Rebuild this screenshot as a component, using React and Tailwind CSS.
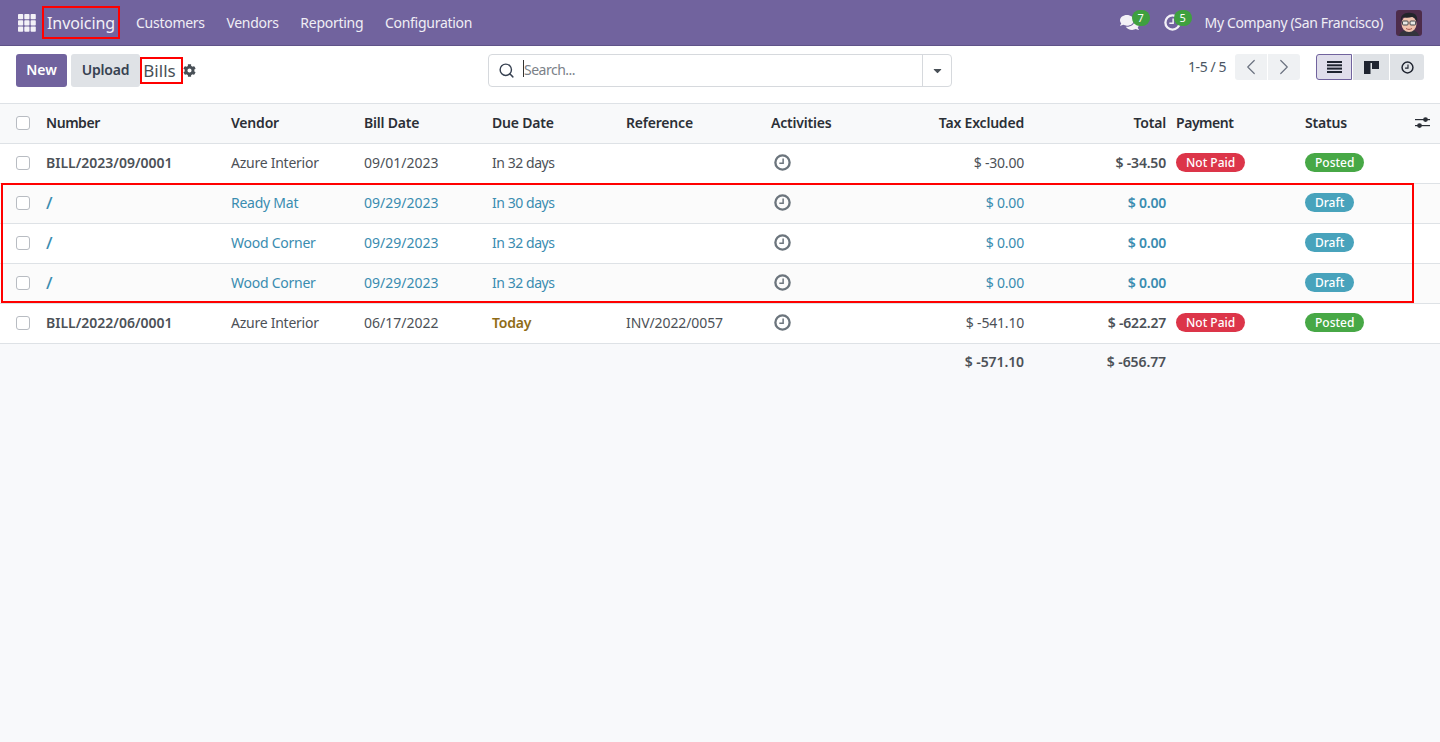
import { ChevronLeft, ChevronRight, Search } from 'lucide-react';
import { FaCaretDown, FaCog, FaComments } from 'react-icons/fa';

const COLS = 'grid grid-cols-[38px_185px_133px_128px_134px_145px_117px_152px_136px_129px_1fr]';

const ROWS = [
  { number: 'BILL/2023/09/0001', vendor: 'Azure Interior', date: '09/01/2023', due: 'In 32 days', ref: '', tax: '$ -30.00', total: '$ -34.50', paid: true, status: 'Posted' },
  { number: '/', vendor: 'Ready Mat', date: '09/29/2023', due: 'In 30 days', ref: '', tax: '$ 0.00', total: '$ 0.00', status: 'Draft', draft: true, striped: true },
  { number: '/', vendor: 'Wood Corner', date: '09/29/2023', due: 'In 32 days', ref: '', tax: '$ 0.00', total: '$ 0.00', status: 'Draft', draft: true },
  { number: '/', vendor: 'Wood Corner', date: '09/29/2023', due: 'In 32 days', ref: '', tax: '$ 0.00', total: '$ 0.00', status: 'Draft', draft: true, striped: true },
  { number: 'BILL/2022/06/0001', vendor: 'Azure Interior', date: '06/17/2022', due: 'Today', dueToday: true, ref: 'INV/2022/0057', tax: '$ -541.10', total: '$ -622.27', paid: true, status: 'Posted' },
];

function AppsIcon() {
  return (
    <svg width="18" height="18" viewBox="0 0 18 18" fill="#f3f1f7">
      {[0, 6.3, 12.6].map((y) => [0, 6.3, 12.6].map((x) => (
        <rect key={`${x}-${y}`} x={x} y={y} width="5.2" height="5.2" rx="0.8" />
      )))}
    </svg>
  );
}

function ClockIcon({ size = 17, color = '#6c757d', stroke = 2.2 }) {
  return (
    <svg width={size} height={size} viewBox="0 0 16 16" fill="none" stroke={color}>
      <circle cx="8" cy="8" r="6.7" strokeWidth={stroke} />
      <path d="M8.6 4.2V8.7H5" strokeWidth="1.4" />
    </svg>
  );
}

function Avatar() {
  return (
    <svg width="26" height="26" viewBox="0 0 26 26" className="rounded-[3px]">
      <rect width="26" height="26" fill="#4d2c4a" />
      <path d="M3 26c1-5 5-6 10-6s9 1 10 6z" fill="#33343c" />
      <ellipse cx="13" cy="14" rx="7.5" ry="8" fill="#f0c3ae" />
      <path d="M5 11C4 5 9 2 15 3c5 0 7 4 6 9-1-3-3-5-5-5-3 1-7 1-9 0-1 1-1 3-2 4z" fill="#22242a" />
      <rect x="6.5" y="11" width="5.6" height="4" rx="1" fill="#e8e8e4" stroke="#44464a" />
      <rect x="14" y="11" width="5.6" height="4" rx="1" fill="#e8e8e4" stroke="#44464a" />
      <path d="M10 18.5c2 1.2 4 1.2 6 0" stroke="#a5524e" fill="none" />
    </svg>
  );
}

function Check() {
  return <span className="block h-[14px] w-[14px] rounded-[3px] border border-[#b8bcc2] bg-white" />;
}

function Badge({ tone, children }) {
  const tones = {
    red: 'bg-[#dc3549]',
    green: 'bg-[#47a846]',
    blue: 'bg-[#48a3bc]',
  };
  return (
    <span className={`inline-block h-[19px] rounded-full px-[10px] text-[12px] font-medium leading-[19px] text-white ${tones[tone]}`}>
      {children}
    </span>
  );
}

function TopBar() {
  return (
    <header className="flex h-[46px] items-center border-b border-[#5f5388] bg-[#71639e] text-[14px] tracking-[-0.27px] text-[#f0eef5]">
      <div className="ml-[18px] flex h-[18px] w-[18px]">
        <AppsIcon />
      </div>
      <div className="ml-[6px] flex h-[33px] w-[78px] items-center justify-center border-2 border-[#f00] text-[16px] tracking-[-0.1px] text-[#f3f1f7]">Invoicing</div>
      <nav className="ml-[16px] flex gap-[21.6px]">
        <span>Customers</span>
        <span>Vendors</span>
        <span>Reporting</span>
        <span>Configuration</span>
      </nav>
      <div className="ml-auto flex items-center">
        <div className="relative flex h-[20px] w-[20px] items-center">
          <FaComments size={19} color="#f3f1f7" />
          <span className="absolute left-[12px] top-[-3px] h-[16px] w-[18px] rounded-full bg-[#3fa03f] text-center text-[11px] leading-[16px] tracking-normal text-white">7</span>
        </div>
        <div className="relative ml-[24px] flex h-[20px] w-[20px] items-center">
          <ClockIcon size={17} color="#f3f1f7" stroke={2.2} />
          <span className="absolute left-[10px] top-[-3px] h-[16px] w-[18px] rounded-full bg-[#3fa03f] text-center text-[11px] leading-[16px] tracking-normal text-white">5</span>
        </div>
        <span className="ml-[21px] tracking-[-0.35px]">My Company (San Francisco)</span>
        <div className="ml-[13px] mr-[18px] flex">
          <Avatar />
        </div>
      </div>
    </header>
  );
}

function ControlPanel() {
  return (
    <div className="grid h-[57px] grid-cols-[488px_464px_1fr] bg-white">
      <div className="flex items-start pl-4 pt-2">
        <button className="h-[33px] w-[51px] rounded-[3px] bg-[#71639e] pb-[2px] text-[14px] font-semibold text-white">New</button>
        <button className="ml-1 h-[33px] w-[69px] rounded-[3px] bg-[#dfe2e6] pb-[2px] text-[14px] font-semibold tracking-[-0.2px] text-[#374151]">Upload</button>
        <div className="flex h-[27px] w-[43px] translate-y-[3px] items-center justify-center border-2 border-[#f00] pr-1 text-[17px] text-[#495057]">Bills</div>
        <FaCog size={13} color="#495057" className="mt-[10px]" />
      </div>
      <div className="pt-2">
        <div className="flex h-[33px] items-center rounded-[4px] border border-[#d6d9dd] bg-white">
          <Search size={17} strokeWidth={2} color="#374151" className="ml-[9px]" />
          <span className="relative ml-[9px] flex-1 pb-[2px] text-[14px] tracking-[-0.5px] text-[#7b8188]">
            <span className="absolute left-[-1px] top-[1px] h-[17px] w-px bg-[#333]" />
            Search...
          </span>
          <div className="flex h-full w-[29px] items-center justify-center border-l border-[#d6d9dd]">
            <FaCaretDown size={13} color="#495057" />
          </div>
        </div>
      </div>
      <div className="flex items-start pt-2">
        <span className="ml-[236px] mt-[2px] text-[14px] tracking-[-0.4px] text-[#4b5563]">1-5 / 5</span>
        <div className="ml-[9px] flex h-[26px] gap-px overflow-hidden rounded-[3px]">
          <span className="flex w-[32px] items-center justify-center bg-[#eff1f3]"><ChevronLeft size={26} strokeWidth={1.1} color="#6b7280" /></span>
          <span className="flex w-[32px] items-center justify-center bg-[#eff1f3]"><ChevronRight size={26} strokeWidth={1.1} color="#6b7280" /></span>
        </div>
        <div className="ml-4 flex h-[26px] gap-px">
          <span className="flex w-[36px] items-center justify-center rounded-l-[3px] border border-[#71639e] bg-[#e0deeb]">
            <svg width="15" height="12" viewBox="0 0 15 12" fill="#1f2430"><rect width="15" height="2" /><rect y="3.3" width="15" height="2" /><rect y="6.6" width="15" height="2" /><rect y="10" width="15" height="2" /></svg>
          </span>
          <span className="flex w-[36px] items-center justify-center bg-[#dfe2e6]">
            <svg width="15" height="13" viewBox="0 0 15 13" fill="#1f2430"><rect width="15" height="2" /><rect y="2" width="6.5" height="11" /><rect x="8" y="2" width="7" height="6" /></svg>
          </span>
          <span className="flex w-[34px] items-center justify-center rounded-r-[3px] bg-[#dfe2e6]">
            <ClockIcon size={13} color="#1f2430" stroke={1.8} />
          </span>
        </div>
      </div>
    </div>
  );
}

function HeaderRow() {
  const cell = 'px-2 flex items-center';
  return (
    <div className={`${COLS} h-[41px] border-y border-[#dee2e6] bg-[#f8f9fa] pb-[2px] text-[14px] font-semibold tracking-[-0.2px] text-[#2b2f36]`}>
      <div className="flex items-center pl-4"><Check /></div>
      <div className={`${cell} tracking-[-0.45px]`}>Number</div>
      <div className={cell}>Vendor</div>
      <div className={cell}>Bill Date</div>
      <div className={cell}>Due Date</div>
      <div className={cell}>Reference</div>
      <div className={cell}>Activities</div>
      <div className={`${cell} justify-end`}>Tax Excluded</div>
      <div className="flex items-center justify-end pr-[2px]">Total</div>
      <div className={`${cell} tracking-[-0.45px]`}>Payment</div>
      <div className="flex items-center justify-between pl-2 pr-[10px]">
        <span>Status</span>
        <svg width="15" height="13" viewBox="0 0 15 13" fill="#2b2f36">
          <rect y="3" width="15" height="1.2" />
          <rect y="9" width="15" height="1.2" />
          <circle cx="10.5" cy="3.6" r="2.4" />
          <circle cx="4.5" cy="9.6" r="2.4" />
        </svg>
      </div>
    </div>
  );
}

function BillRow({ row }) {
  const cell = 'px-2 flex items-center';
  const tone = row.draft ? 'text-[#3a8cb0]' : 'text-[#4c5157]';
  const stripe = row.striped ? 'bg-[#fbfbfb]' : 'bg-white';
  return (
    <div className={`${COLS} h-[40px] border-b border-[#dee2e6] pb-[2px] text-[14px] ${tone} ${stripe}`}>
      <div className="flex items-center pl-4"><Check /></div>
      <div className={`${cell} ${row.draft ? 'text-[17px] font-medium' : 'font-semibold'}`}>{row.number}</div>
      <div className={`${cell} tracking-[-0.25px]`}>{row.vendor}</div>
      <div className={cell}>{row.date}</div>
      <div className={`${cell} ${row.dueToday ? 'font-semibold tracking-[-0.2px] text-[#8f6b16]' : 'tracking-[-0.45px]'}`}>{row.due}</div>
      <div className={`${cell} tracking-[-0.1px]`}>{row.ref}</div>
      <div className="flex items-center pl-[11px]"><ClockIcon /></div>
      <div className={`${cell} justify-end tracking-[-0.2px]`}>{row.tax}</div>
      <div className="flex items-center justify-end pr-[2px] font-semibold tracking-[-0.2px]">{row.total}</div>
      <div className={cell}>{row.paid && <Badge tone="red">Not Paid</Badge>}</div>
      <div className={cell}>
        <Badge tone={row.draft ? 'blue' : 'green'}>{row.status}</Badge>
      </div>
    </div>
  );
}

export default function App() {
  return (
    <div className="flex h-[742px] flex-col overflow-hidden bg-[#f8f9fb] font-['Noto_Sans',sans-serif]">
      <TopBar />
      <ControlPanel />
      <HeaderRow />
      <div className="relative">
        {ROWS.map((row, i) => <BillRow key={i} row={row} />)}
        <div className="pointer-events-none absolute left-[1px] top-[39px] h-[120px] w-[1413px] border-2 border-[#f00]" />
      </div>
      <div className={`${COLS} h-[37px] pb-[2px] text-[14px] font-semibold tracking-[-0.1px] text-[#4c5157]`}>
        <div className="col-start-8 flex items-center justify-end px-2">$ -571.10</div>
        <div className="flex items-center justify-end pr-[2px]">$ -656.77</div>
      </div>
    </div>
  );
}
